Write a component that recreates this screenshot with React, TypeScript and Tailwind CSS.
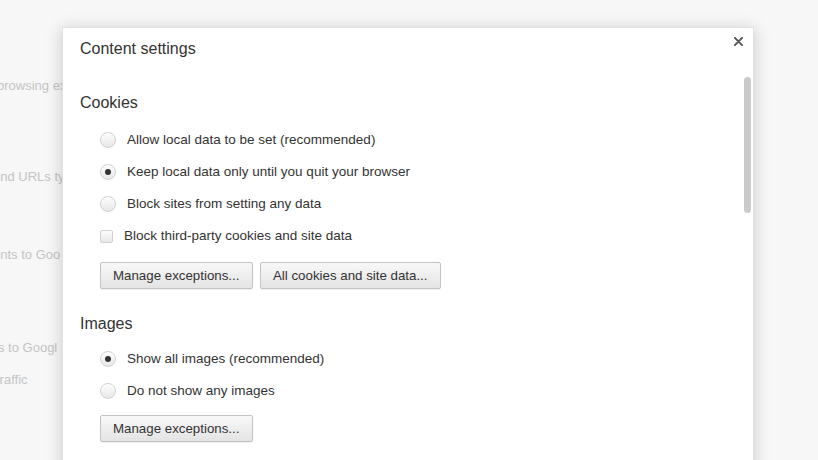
const font = { fontFamily: '"Liberation Sans", Arial, sans-serif' }

function Radio({ checked, label }: { checked?: boolean; label: string }) {
  return (
    <div className="flex items-center h-8 pl-5">
      <span className="flex items-center justify-center w-4 h-4 rounded-full border border-[#d2d2d2] bg-gradient-to-b from-[#fdfdfd] to-[#e8e8e8] shadow-[inset_0_1px_1px_rgba(255,255,255,0.8)]">
        {checked && <span className="w-[6px] h-[6px] rounded-full bg-[#333]" />}
      </span>
      <span className="ml-[11px] text-[13.5px] text-[#333]">{label}</span>
    </div>
  )
}

function Checkbox({ label }: { label: string }) {
  return (
    <div className="flex items-center h-8 pl-5">
      <span className="w-[13px] h-[13px] rounded-[2px] border border-[#d2d2d2] bg-gradient-to-b from-[#fdfdfd] to-[#e8e8e8]" />
      <span className="ml-[11px] text-[13.5px] text-[#333]">{label}</span>
    </div>
  )
}

function Button({ label, width }: { label: string; width: string }) {
  return (
    <button
      className={`h-[27px] ${width} px-3 text-left text-[13.3px] text-[#333] rounded-[2px] border border-[#c3c3c3] bg-gradient-to-b from-[#f8f8f8] to-[#e4e4e4] shadow-[0_1px_0_rgba(0,0,0,0.06)]`}
    >
      {label}
    </button>
  )
}

export default function App() {
  return (
    <div className="relative w-[818px] h-[460px] overflow-hidden bg-[#f7f7f7]" style={font}>
      {/* settings page behind the dialog */}
      <div className="w-[62px] overflow-hidden flex flex-col text-[13px] text-[#c4c4c4] whitespace-nowrap">
        <div className="mt-[76px] -ml-[3px]">browsing ex</div>
        <div className="mt-[71px] -ml-[7px]">and URLs ty</div>
        <div className="mt-[59px] -ml-[7px]">ents to Goo</div>
        <div className="mt-[73px] -ml-[2px]">s to Googl</div>
        <div className="mt-[13px] -ml-[4px]">traffic</div>
      </div>

      {/* Content settings dialog */}
      <div className="absolute left-[62px] top-[27px] w-[692px] h-[460px] bg-white border border-[#e0e0e0] shadow-[0_2px_16px_rgba(0,0,0,0.18)]">
        <button className="absolute right-[10px] top-[9px] w-[9px] h-[9px]">
          <svg viewBox="0 0 10 10" className="w-[9px] h-[9px]">
            <path d="M1 1 L9 9 M9 1 L1 9" stroke="#555" strokeWidth="2.2" strokeLinecap="round" />
          </svg>
        </button>
        <div className="absolute right-[2px] top-[49px] w-[7px] h-[136px] rounded-full bg-[#cacaca]" />

        <div className="flex flex-col pl-[17px] pt-[11px]">
          <div className="h-5 leading-5 text-[16px] text-[#333]">Content settings</div>

          <div className="mt-[34px] h-5 leading-5 text-[16px] text-[#333]">Cookies</div>
          <div className="mt-[11px] flex flex-col">
            <Radio label="Allow local data to be set (recommended)" />
            <Radio checked label="Keep local data only until you quit your browser" />
            <Radio label="Block sites from setting any data" />
            <Checkbox label="Block third-party cookies and site data" />
          </div>
          <div className="mt-[10px] pl-5 flex gap-[7px]">
            <Button label="Manage exceptions..." width="w-[153px]" />
            <Button label="All cookies and site data..." width="w-[181px]" />
          </div>

          <div className="mt-[25px] h-5 leading-5 text-[16px] text-[#333]">Images</div>
          <div className="mt-[9px] flex flex-col">
            <Radio checked label="Show all images (recommended)" />
            <Radio label="Do not show any images" />
          </div>
          <div className="mt-[8px] pl-5 flex">
            <Button label="Manage exceptions..." width="w-[153px]" />
          </div>
        </div>
      </div>
    </div>
  )
}
